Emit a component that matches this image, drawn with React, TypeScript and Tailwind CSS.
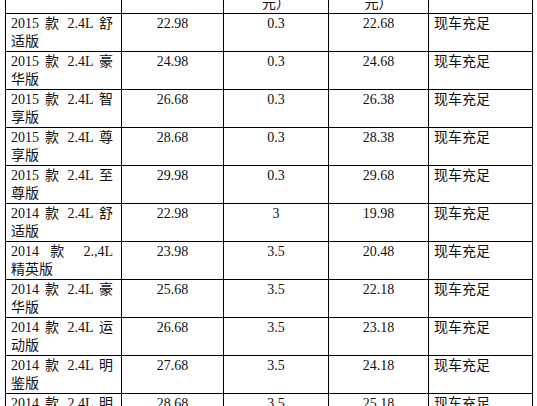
const rows = [
  { a: "2015 款 2.4L 舒", b: "适版", price: "22.98", off: "0.3", now: "22.68" },
  { a: "2015 款 2.4L 豪", b: "华版", price: "24.98", off: "0.3", now: "24.68" },
  { a: "2015 款 2.4L 智", b: "享版", price: "26.68", off: "0.3", now: "26.38" },
  { a: "2015 款 2.4L 尊", b: "享版", price: "28.68", off: "0.3", now: "28.38" },
  { a: "2015 款 2.4L 至", b: "尊版", price: "29.98", off: "0.3", now: "29.68" },
  { a: "2014 款 2.4L 舒", b: "适版", price: "22.98", off: "3", now: "19.98" },
  { a: "2014 款 2.,4L", b: "精英版", price: "23.98", off: "3.5", now: "20.48" },
  { a: "2014 款 2.4L 豪", b: "华版", price: "25.68", off: "3.5", now: "22.18" },
  { a: "2014 款 2.4L 运", b: "动版", price: "26.68", off: "3.5", now: "23.18" },
  { a: "2014 款 2.4L 明", b: "鉴版", price: "27.68", off: "3.5", now: "24.18" },
  { a: "2014 款 2.4L 明", b: "臻版", price: "28.68", off: "3.5", now: "25.18" },
];

const cell = "border border-black align-top p-0";

export default function App() {
  return (
    <div
      className="h-[406px] w-[537px] overflow-hidden bg-white pl-[5px] text-[14px] leading-[18px] text-[#111]"
      style={{ fontFamily: '"Liberation Serif", "Noto Sans CJK SC", serif' }}
    >
      <table className="-mt-[25px] w-[527px] table-fixed border-collapse">
        <colgroup>
          <col className="w-[116px]" />
          <col className="w-[102px]" />
          <col className="w-[105px]" />
          <col className="w-[100px]" />
          <col className="w-[104px]" />
        </colgroup>
        <tbody>
          <tr className="h-[37px]">
            <td className={`${cell} pl-[5px]`}>车型</td>
            <td className={`${cell} text-center`}>指导价</td>
            <td className={`${cell} pt-[1px] text-center`}>
              优惠（万
              <br />
              元）
            </td>
            <td className={`${cell} pt-[1px] text-center`}>
              现价（万
              <br />
              元）
            </td>
            <td className={`${cell} pl-[5px]`}>库存</td>
          </tr>
          {rows.map((r, i) => (
            <tr key={i} className="h-[37px]">
              <td className={`${cell} pl-[5px] pr-[8px] pt-[1px]`}>
                <div className="text-justify [text-align-last:justify]">{r.a}</div>
                <div>{r.b}</div>
              </td>
              <td className={`${cell} pt-[1px] text-center`}>{r.price}</td>
              <td className={`${cell} pt-[1px] text-center`}>{r.off}</td>
              <td className={`${cell} pt-[1px] text-center`}>{r.now}</td>
              <td className={`${cell} pl-[5px] pt-[1px]`}>现车充足</td>
            </tr>
          ))}
        </tbody>
      </table>
    </div>
  );
}
